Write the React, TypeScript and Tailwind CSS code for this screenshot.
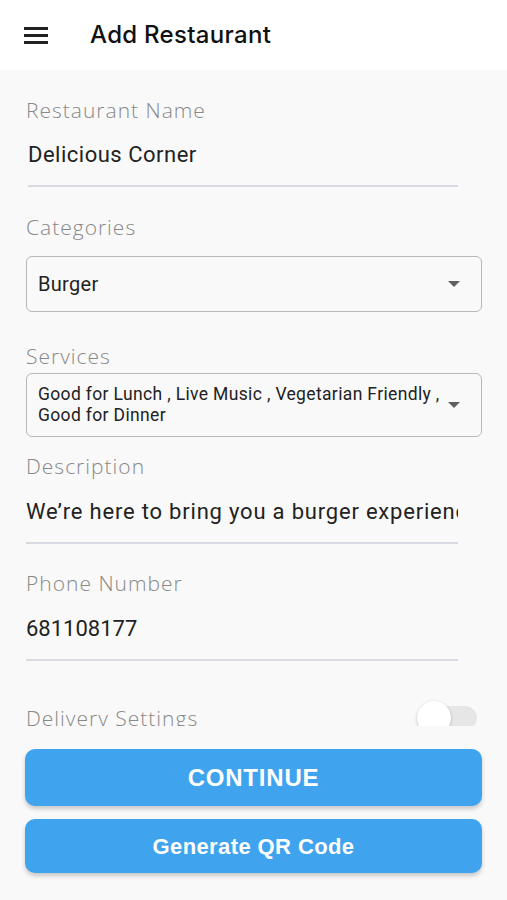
import React from "react";

const labelCls =
  "h-[28px] leading-[28px] text-[21px] text-[#888888] font-light tracking-[1px]";
const labelFont = { fontFamily: "'Open Sans', 'Noto Sans', sans-serif" } as const;
const valueFont = { fontFamily: "Roboto, 'Liberation Sans', sans-serif" } as const;

function Arrow() {
  return (
    <svg width="12" height="6" viewBox="0 0 12 6" className="shrink-0">
      <path d="M0 0 L12 0 L6 6 Z" fill="#5f5f5f" />
    </svg>
  );
}

export default function App() {
  return (
    <div className="w-[507px] h-[900px] flex flex-col bg-[#f9f9f9] overflow-hidden">
      <header className="h-[70px] shrink-0 bg-white flex items-center">
        <div className="w-[24px] ml-[24px] flex flex-col gap-[4px]">
          <div className="h-[3px] bg-[#222]" />
          <div className="h-[3px] bg-[#222]" />
          <div className="h-[3px] bg-[#222]" />
        </div>
        <h1
          className="ml-[42px] text-[24px] font-medium text-[#111] tracking-[0.3px]"
          style={{ fontFamily: "Inter, 'Open Sans', sans-serif" }}
        >
          Add Restaurant
        </h1>
      </header>

      <div className="h-[656px] shrink-0 overflow-hidden px-[26px] relative">
        <div className={`${labelCls} mt-[26px]`} style={labelFont}>
          Restaurant Name
        </div>
        <div
          className="mt-[16px] h-[30px] leading-[30px] pl-[2px] text-[22px] tracking-[0.5px] text-[#222]"
          style={valueFont}
        >
          Delicious Corner
        </div>
        <div className="mt-[15px] ml-[2px] w-[430px] h-[2px] bg-[#d8dce2]" />

        <div className={`${labelCls} mt-[26px]`} style={labelFont}>
          Categories
        </div>
        <div className="mt-[15px] h-[56px] w-[456px] border-[1.5px] border-[#b8b8b8] rounded-[6px] flex items-center pl-[11px] pr-[21px]">
          <span className="flex-1 text-[20px] tracking-[0.3px] text-[#222]" style={valueFont}>
            Burger
          </span>
          <Arrow />
        </div>

        <div className={`${labelCls} mt-[30px]`} style={labelFont}>
          Services
        </div>
        <div className="mt-[3px] h-[64px] w-[456px] border-[1.5px] border-[#b8b8b8] rounded-[6px] flex items-center pl-[11px] pr-[21px]">
          <span
            className="flex-1 text-[17.5px] tracking-[0.35px] leading-[21px] text-[#222] whitespace-nowrap"
            style={valueFont}
          >
            Good for Lunch , Live Music , Vegetarian Friendly ,
            <br />
            Good for Dinner
          </span>
          <Arrow />
        </div>

        <div className={`${labelCls} mt-[15px]`} style={labelFont}>
          Description
        </div>
        <div
          className="mt-[17px] h-[30px] leading-[30px] w-[432px] overflow-hidden whitespace-nowrap text-[22px] tracking-[0.8px] text-[#222]"
          style={valueFont}
        >
          We’re here to bring you a burger experience
        </div>
        <div className="mt-[15px] w-[432px] h-[2px] bg-[#d8dce2]" />

        <div className={`${labelCls} mt-[25px]`} style={labelFont}>
          Phone Number
        </div>
        <div
          className="mt-[17px] h-[30px] leading-[30px] text-[22px] text-[#222]"
          style={valueFont}
        >
          681108177
        </div>
        <div className="mt-[15px] w-[432px] h-[2px] bg-[#d8dce2]" />

        <div className="mt-[43px] flex items-start justify-between">
          <div className={labelCls} style={labelFont}>
            Delivery Settings
          </div>
          <div className="relative w-[61px] h-[34px] mr-[4px] -mt-[3px]">
            <div className="absolute left-[8px] right-0 top-[5px] h-[24px] rounded-full bg-[#e6e6e6]" />
            <div className="absolute left-[1px] top-0 w-[34px] h-[34px] rounded-full bg-white shadow-[0_1px_3px_rgba(0,0,0,0.25)]" />
          </div>
        </div>
      </div>

      <div className="flex-1 px-[25px] pt-[23px] flex flex-col gap-[13px]">
        <button
          className="h-[57px] w-[457px] rounded-[10px] bg-[#3fa3ee] text-white text-[24px] font-bold tracking-[0.8px] shadow-[0_3px_4px_rgba(0,0,0,0.2)]"
          style={{ fontFamily: "'Liberation Sans', Arial, sans-serif" }}
        >
          CONTINUE
        </button>
        <button
          className="h-[54px] w-[457px] rounded-[10px] bg-[#3fa3ee] text-white text-[22px] font-bold tracking-[0.4px] shadow-[0_3px_4px_rgba(0,0,0,0.2)]"
          style={{ fontFamily: "'Liberation Sans', Arial, sans-serif" }}
        >
          Generate QR Code
        </button>
      </div>
    </div>
  );
}
